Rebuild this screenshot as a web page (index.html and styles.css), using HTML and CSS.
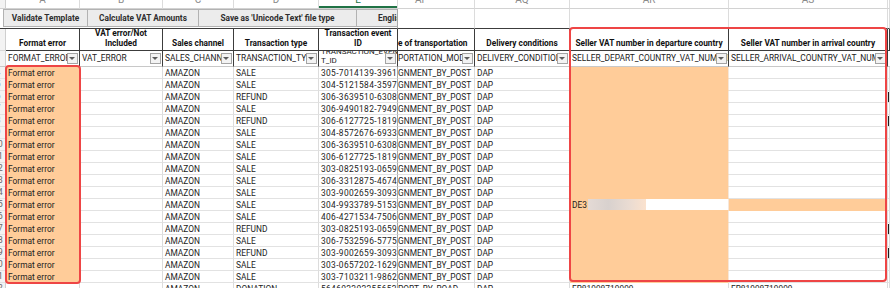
FILE: index.html
```html
<!DOCTYPE html>
<html lang="en">
<head>
    <meta charset="UTF-8">
    <title>VAT Template</title>
    <link rel="stylesheet" href="styles.css">
</head>
<body>
    <main class="sheet">
        <div class="row letters">
            <div class="rh"></div>
            <div><span>A</span></div>
            <div><span>B</span></div>
            <div><span>C</span></div>
            <div><span>D</span></div>
            <div class="sel"><span>E</span></div>
            <div class="shift"><span>AP</span></div>
            <div><span>AQ</span></div>
            <div><span>AR</span></div>
            <div><span>AS</span></div>
            <div></div>
        </div>

        <div class="row tools">
            <div class="bar">
                <button class="btn btn-validate">Validate Template</button>
                <button class="btn btn-calc">Calculate VAT Amounts</button>
                <button class="btn btn-save">Save as 'Unicode Text' file type</button>
                <button class="btn btn-lang">English</button>
            </div>
            <div></div><div></div><div></div><div></div><div></div>
        </div>

        <div class="row head">
            <div class="rh"></div>
            <div>Format error</div>
            <div>VAT error/Not<br>Included</div>
            <div>Sales channel</div>
            <div>Transaction type</div>
            <div class="frz">Transaction event<br>ID</div>
            <div class="left">e of transportation</div>
            <div>Delivery conditions</div>
            <div>Seller VAT number in departure country</div>
            <div>Seller VAT number in arrival country</div>
            <div></div>
        </div>

        <div class="row filter">
            <div class="rh"></div>
            <div>FORMAT_ERROR<i class="dd"></i></div>
            <div>VAT_ERROR<i class="dd"></i></div>
            <div>SALES_CHANNEL<i class="dd"></i></div>
            <div>TRANSACTION_TYPE<i class="dd"></i></div>
            <div class="frz two"><span>TRANSACTION_EVEN<br>T_ID</span><i class="dd"></i></div>
            <div class="flush">PORTATION_MODE<i class="dd"></i></div>
            <div>DELIVERY_CONDITIONS<i class="dd"></i></div>
            <div>SELLER_DEPART_COUNTRY_VAT_NUMBER<i class="dd"></i></div>
            <div>SELLER_ARRIVAL_COUNTRY_VAT_NUMBER<i class="dd"></i></div>
            <div></div>
        </div>

        <div class="row data"><div class="rh"><span>4</span></div><div class="err">Format error</div><div></div><div>AMAZON</div><div>SALE</div><div class="frz id">305-7014139-3961</div><div class="flush">GNMENT_BY_POST</div><div>DAP</div><div class="fill"></div><div></div><div class="at"></div></div>
        <div class="row data"><div class="rh"><span>5</span></div><div class="err">Format error</div><div></div><div>AMAZON</div><div>SALE</div><div class="frz id">304-5121584-3597</div><div class="flush">GNMENT_BY_POST</div><div>DAP</div><div class="fill"></div><div></div><div class="at"></div></div>
        <div class="row data"><div class="rh"><span>6</span></div><div class="err">Format error</div><div></div><div>AMAZON</div><div>REFUND</div><div class="frz id">306-3639510-6308</div><div class="flush">GNMENT_BY_POST</div><div>DAP</div><div class="fill"></div><div></div><div class="at"><i class="neg"></i></div></div>
        <div class="row data"><div class="rh"><span>7</span></div><div class="err">Format error</div><div></div><div>AMAZON</div><div>SALE</div><div class="frz id">306-9490182-7949</div><div class="flush">GNMENT_BY_POST</div><div>DAP</div><div class="fill"></div><div></div><div class="at"></div></div>
        <div class="row data"><div class="rh"><span>8</span></div><div class="err">Format error</div><div></div><div>AMAZON</div><div>REFUND</div><div class="frz id">306-6127725-1819</div><div class="flush">GNMENT_BY_POST</div><div>DAP</div><div class="fill"></div><div></div><div class="at"><i class="neg"></i></div></div>
        <div class="row data"><div class="rh"><span>9</span></div><div class="err">Format error</div><div></div><div>AMAZON</div><div>SALE</div><div class="frz id">304-8572676-6933</div><div class="flush">GNMENT_BY_POST</div><div>DAP</div><div class="fill"></div><div></div><div class="at"></div></div>
        <div class="row data"><div class="rh"><span>10</span></div><div class="err">Format error</div><div></div><div>AMAZON</div><div>SALE</div><div class="frz id">306-3639510-6308</div><div class="flush">GNMENT_BY_POST</div><div>DAP</div><div class="fill"></div><div></div><div class="at"></div></div>
        <div class="row data"><div class="rh"><span>11</span></div><div class="err">Format error</div><div></div><div>AMAZON</div><div>SALE</div><div class="frz id">306-6127725-1819</div><div class="flush">GNMENT_BY_POST</div><div>DAP</div><div class="fill"></div><div></div><div class="at"></div></div>
        <div class="row data"><div class="rh"><span>12</span></div><div class="err">Format error</div><div></div><div>AMAZON</div><div>SALE</div><div class="frz id">303-0825193-0659</div><div class="flush">GNMENT_BY_POST</div><div>DAP</div><div class="fill"></div><div></div><div class="at"></div></div>
        <div class="row data"><div class="rh"><span>13</span></div><div class="err">Format error</div><div></div><div>AMAZON</div><div>SALE</div><div class="frz id">306-3312875-4674</div><div class="flush">GNMENT_BY_POST</div><div>DAP</div><div class="fill"></div><div></div><div class="at"></div></div>
        <div class="row data"><div class="rh"><span>14</span></div><div class="err">Format error</div><div></div><div>AMAZON</div><div>SALE</div><div class="frz id">303-9002659-3093</div><div class="flush">GNMENT_BY_POST</div><div>DAP</div><div class="fill"></div><div></div><div class="at"></div></div>
        <div class="row data"><div class="rh"><span>15</span></div><div class="err">Format error</div><div></div><div>AMAZON</div><div>SALE</div><div class="frz id">304-9933789-5153</div><div class="flush">GNMENT_BY_POST</div><div>DAP</div><div class="fill vat">DE3<span class="redact"></span><span class="blank"></span></div><div class="fill"></div><div class="at"></div></div>
        <div class="row data"><div class="rh"><span>16</span></div><div class="err">Format error</div><div></div><div>AMAZON</div><div>SALE</div><div class="frz id">406-4271534-7506</div><div class="flush">GNMENT_BY_POST</div><div>DAP</div><div class="fill"></div><div></div><div class="at"></div></div>
        <div class="row data"><div class="rh"><span>17</span></div><div class="err">Format error</div><div></div><div>AMAZON</div><div>REFUND</div><div class="frz id">303-0825193-0659</div><div class="flush">GNMENT_BY_POST</div><div>DAP</div><div class="fill"></div><div></div><div class="at"><i class="neg"></i></div></div>
        <div class="row data"><div class="rh"><span>18</span></div><div class="err">Format error</div><div></div><div>AMAZON</div><div>SALE</div><div class="frz id">306-7532596-5775</div><div class="flush">GNMENT_BY_POST</div><div>DAP</div><div class="fill"></div><div></div><div class="at"></div></div>
        <div class="row data"><div class="rh"><span>19</span></div><div class="err">Format error</div><div></div><div>AMAZON</div><div>REFUND</div><div class="frz id">303-9002659-3093</div><div class="flush">GNMENT_BY_POST</div><div>DAP</div><div class="fill"></div><div></div><div class="at"><i class="neg"></i></div></div>
        <div class="row data"><div class="rh"><span>20</span></div><div class="err">Format error</div><div></div><div>AMAZON</div><div>SALE</div><div class="frz id">303-0657202-1629</div><div class="flush">GNMENT_BY_POST</div><div>DAP</div><div class="fill"></div><div></div><div class="at"></div></div>
        <div class="row data"><div class="rh"><span>21</span></div><div class="err">Format error</div><div></div><div>AMAZON</div><div>SALE</div><div class="frz id">303-7103211-9862</div><div class="flush">GNMENT_BY_POST</div><div>DAP</div><div class="fill"></div><div></div><div class="at"></div></div>
        <div class="row data"><div class="rh"><span>22</span></div><div></div><div></div><div>AMAZON</div><div>DONATION</div><div class="frz id">5646022022556527</div><div class="flush">PORT_BY_ROAD</div><div>DAP</div><div>FR81998719999</div><div>FR81998719999</div><div class="at"></div></div>

        <!-- highlight frames -->
        <div class="frame frame-err"></div>
        <div class="frame frame-vat"></div>
    </main>
</body>
</html>
```

FILE: styles.css
```css
* {
    box-sizing: border-box;
}
body {
    margin: 0;
    background: #fff;
    overflow: hidden;
    font-family: Roboto, "Liberation Sans", sans-serif;
    font-size: 8.4px;
    color: #1c1c1c;
}
.sheet {
    position: relative;
    width: 890px;
    height: 288px;
    overflow: hidden;
}
.row {
    display: grid;
    grid-template-columns: 6px 74px 83px 71px 85px 79px 77px 95px 159px 159px 1fr;
}
.row > div {
    border-right: 1px solid #dcdcdc;
    border-bottom: 1px solid #e2e2e2;
    overflow: hidden;
    white-space: nowrap;
}
.row > .rh {
    background: #f3f3f3;
    border-right-color: #cfcfcf;
}

/* column letters */
.letters {
    height: 9px;
}
.letters > div {
    color: #8a8a8a;
    font-size: 10px;
    line-height: 10px;
    text-align: center;
    border-bottom-color: #d2d2d2;
}
.letters span {
    display: block;
    margin-top: -5px;
}
.letters .sel {
    color: #217346;
    box-shadow: inset 0 -2px 0 #217346;
}
.letters .shift {
    padding-right: 29px;
}

/* macro buttons */
.tools {
    height: 20px;
}
.tools > div {
    border-bottom-color: #3c3c3c;
}
.tools .bar {
    grid-column: 1 / 7;
    display: flex;
    padding-left: 3px;
    border-right-color: #a8a8a8;
}
.btn {
    all: unset;
    box-sizing: border-box;
    flex: none;
    height: 18px;
    display: flex;
    align-items: center;
    justify-content: center;
    background: #ececec;
    border: 1px solid #b2b2b2;
    border-left: 0;
    font-family: Roboto, "Liberation Sans", sans-serif;
    font-size: 8.3px;
    font-weight: 700;
    color: #2e2e2e;
}
.btn-validate {
    width: 85px;
    border-left: 1px solid #b2b2b2;
}
.btn-calc {
    width: 111px;
}
.btn-save {
    width: 158px;
}
.btn-lang {
    width: 80px;
    justify-content: flex-start;
    padding-left: 21px;
}

/* header captions */
.head {
    height: 22px;
}
.head > div {
    display: flex;
    align-items: flex-end;
    justify-content: center;
    text-align: center;
    padding-bottom: 2px;
    font-size: 8.3px;
    font-weight: 700;
    line-height: 10px;
    color: #111;
    border-right-color: #3c3c3c;
    border-bottom-color: #3c3c3c;
}
.head > .rh {
    border-right-color: #cfcfcf;
    border-bottom-color: #d8d8d8;
}
.head > .left {
    justify-content: flex-start;
}

/* filter keys */
.filter {
    height: 16px;
}
.filter > div {
    position: relative;
    padding-left: 2px;
    line-height: 15px;
    color: #222;
    border-right-color: #3c3c3c;
    border-bottom-color: #c8c8c8;
}
.filter > .rh {
    border-right-color: #cfcfcf;
}
.filter > .two {
    display: flex;
    align-items: flex-end;
    padding-bottom: 1px;
    line-height: 8.5px;
    font-size: 8px;
}
.filter > .flush {
    padding-left: 0;
}
.dd {
    position: absolute;
    right: 1px;
    top: 2px;
    width: 11px;
    height: 11px;
    background: #f3f3f3;
    border: 1px solid #a4a4a4;
}
.dd::after {
    content: "";
    position: absolute;
    left: 1px;
    top: 3px;
    border-left: 3.5px solid transparent;
    border-right: 3.5px solid transparent;
    border-top: 3.5px solid #5c5c5c;
}

/* data rows */
.data {
    height: 12px;
}
.data > div {
    padding: 1px 0 0 2px;
    line-height: 10px;
}
.data .rh {
    padding: 0;
    color: #666;
}
.data .rh span {
    display: block;
    width: 20px;
    margin-left: -12px;
    text-align: center;
}
.data .frz,
.tools .frz {
    border-right-color: #a9a9a9;
}
.data .id {
    letter-spacing: 0.35px;
}
.data .flush {
    padding-left: 0;
}
.data .err {
    background: #ffcc99;
    border-color: #ffcc99;
}
.data .fill {
    background: #ffcc99;
    border-bottom-color: #ffcc99;
    border-right-color: #f6e7da;
}
.data .vat {
    display: flex;
    padding-top: 0;
    align-items: center;
}
.redact {
    width: 58px;
    height: 11px;
    margin-left: 1px;
    background: linear-gradient(90deg, #e4dad5, #d8d1ce 35%, #e9dbd2 70%, #fbe2ce);
}
.blank {
    flex: 1;
    height: 12px;
    background: #fff;
}
.data .at {
    padding: 1px 0 0 0;
}
.neg {
    display: block;
    width: 2px;
    height: 10px;
    background: #1e1e1e;
}

/* red highlight frames over the grid */
.frame {
    position: absolute;
    border: 2px solid #ee4545;
    border-radius: 4px;
    pointer-events: none;
}
.frame-err {
    left: 5px;
    top: 65px;
    width: 76px;
    height: 219px;
}
.frame-vat {
    left: 569px;
    top: 27px;
    width: 318px;
    height: 255px;
}
```
